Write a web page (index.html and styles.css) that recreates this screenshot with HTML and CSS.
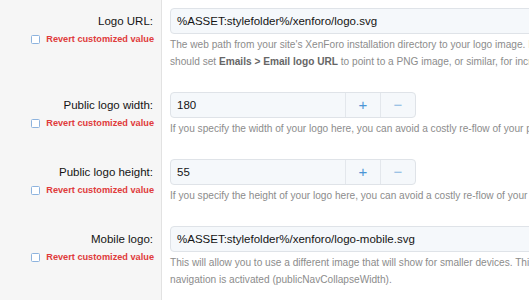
FILE: index.html
```html
<!DOCTYPE html>
<html lang="en">
<head>
  <meta charset="UTF-8" />
  <title>Style properties: Logo</title>
  <link rel="stylesheet" href="styles.css">
</head>
<body>
  <div class="form-block">
    <!-- Logo URL -->
    <div class="form-row">
      <div class="row-label">
        <div class="label">Logo URL:</div>
        <label class="revert"><span class="check"></span>Revert customized value</label>
      </div>
      <div class="row-input">
        <div class="input wide">%ASSET:stylefolder%/xenforo/logo.svg</div>
        <div class="explain">
          <div>The web path from your site's XenForo installation directory to your logo image. If you are using an SVG image, you</div>
          <div>should set <b>Emails &gt; Email logo URL</b> to point to a PNG image, or similar, for increased compatibility with email clients.</div>
        </div>
      </div>
    </div>

    <!-- Public logo width -->
    <div class="form-row">
      <div class="row-label">
        <div class="label">Public logo width:</div>
        <label class="revert"><span class="check"></span>Revert customized value</label>
      </div>
      <div class="row-input">
        <div class="number-box">
          <div class="input number">180</div>
          <span class="step up">+</span>
          <span class="step down">&minus;</span>
        </div>
        <div class="explain">
          <div>If you specify the width of your logo here, you can avoid a costly re-flow of your page when the logo image loads.</div>
        </div>
      </div>
    </div>

    <!-- Public logo height -->
    <div class="form-row">
      <div class="row-label">
        <div class="label">Public logo height:</div>
        <label class="revert"><span class="check"></span>Revert customized value</label>
      </div>
      <div class="row-input">
        <div class="number-box">
          <div class="input number">55</div>
          <span class="step up">+</span>
          <span class="step down">&minus;</span>
        </div>
        <div class="explain">
          <div>If you specify the height of your logo here, you can avoid a costly re-flow of your page when the logo image loads.</div>
        </div>
      </div>
    </div>

    <!-- Mobile logo -->
    <div class="form-row">
      <div class="row-label">
        <div class="label">Mobile logo:</div>
        <label class="revert"><span class="check"></span>Revert customized value</label>
      </div>
      <div class="row-input">
        <div class="input wide">%ASSET:stylefolder%/xenforo/logo-mobile.svg</div>
        <div class="explain">
          <div>This will allow you to use a different image that will show for smaller devices. This is used when the responsive</div>
          <div>navigation is activated (publicNavCollapseWidth).</div>
        </div>
      </div>
    </div>
  </div>
</body>
</html>
```

FILE: styles.css
```css
body {
  margin: 0;
  background: #fff;
  color: #141414;
  font-family: "Liberation Sans", Arial, sans-serif;
  overflow: hidden;
  height: 300px;
}

.form-block {
  width: 900px;
  min-height: 300px;
  display: flex;
  flex-direction: column;
  background: linear-gradient(to right, #f6f6f6 0, #f6f6f6 161px, #e2e2e2 161px, #e2e2e2 162px, #fff 162px);
}

.form-row {
  display: grid;
  grid-template-columns: 162px 1fr;
}

.row-label {
  padding: 8px 8px 14px 0;
  display: flex;
  flex-direction: column;
  align-items: flex-end;
}

.label {
  font-size: 11.5px;
  line-height: 26px;
  padding-right: 1px;
}

.revert {
  display: flex;
  align-items: center;
  gap: 6px;
  font-size: 9.2px;
  font-weight: 700;
  color: #e03b3b;
  line-height: 11px;
}

.check {
  width: 7px;
  height: 7px;
  border: 1px solid #8db3de;
  border-radius: 1.5px;
  background: #fff;
}

.row-input {
  padding: 8px 0 14px 8px;
}

.input {
  box-sizing: border-box;
  height: 26px;
  line-height: 24px;
  padding: 0 6px;
  font-size: 11.5px;
  background: #f5f8fb;
  border: 1px solid #dfe3e8;
  border-radius: 4px;
  white-space: nowrap;
}

.input.wide {
  width: 640px;
}

.number-box {
  display: flex;
  width: 246px;
  height: 26px;
  box-sizing: border-box;
  border: 1px solid #dfe3e8;
  border-radius: 4px;
  background: #f5f8fb;
}

.number-box .input {
  flex: 1;
  height: 24px;
  line-height: 24px;
  border: none;
  border-radius: 0;
  background: transparent;
}

.step {
  width: 34px;
  border-left: 1px solid #e3e7ec;
  text-align: center;
  line-height: 23px;
  font-size: 15px;
  font-weight: 300;
  color: #4b95d6;
}

.step.down {
  color: #8cb9e2;
}

.explain {
  margin-top: 2px;
  font-size: 10.15px;
  line-height: 17px;
  color: #8c8c8c;
  white-space: nowrap;
}

.explain b {
  color: #666;
}
```
